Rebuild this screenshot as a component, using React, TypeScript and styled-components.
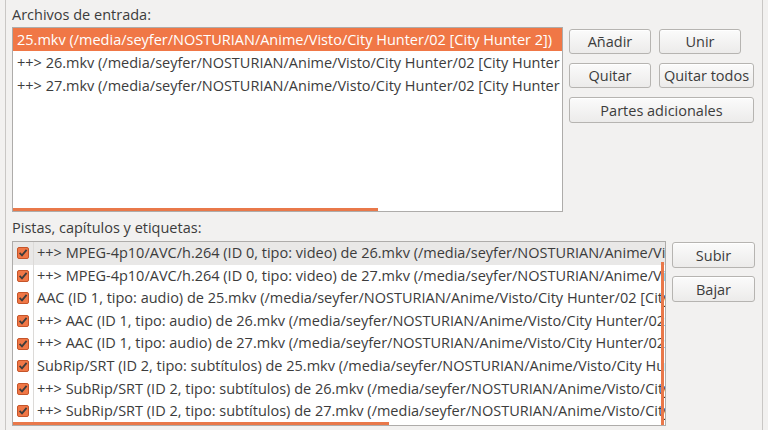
import React from "react";
import styled, { createGlobalStyle } from "styled-components";

const Global = createGlobalStyle`
  html, body { margin: 0; padding: 0; background: #f2f1f0; }
  body {
    font-family: "Open Sans", "DejaVu Sans", sans-serif;
    font-size: 14.5px;
    color: #3c3c3c;
    width: 768px;
    height: 430px;
    overflow: hidden;
  }
`;

const Frame = styled.div`
  box-sizing: border-box;
  margin-left: 5px;
  width: 758px;
  height: 430px;
  border-left: 1px solid #c9c7c5;
  border-right: 1px solid #c9c7c5;
  padding: 0 7px 0 6px;
  display: flex;
  flex-direction: column;
`;

const Label = styled.div<{ $h: number }>`
  height: ${(p) => p.$h}px;
  display: flex;
  align-items: center;
  padding-top: 1px;
  box-sizing: border-box;
  white-space: nowrap;
`;

const Section = styled.div<{ $gap: number }>`
  display: flex;
  align-items: flex-start;
  gap: ${(p) => p.$gap}px;
`;

const ListBox = styled.div<{ $w: number }>`
  position: relative;
  box-sizing: border-box;
  width: ${(p) => p.$w}px;
  height: 185px;
  background: #ffffff;
  border: 1px solid #aeacaa;
  overflow: hidden;
`;

const FileRow = styled.div<{ $sel?: boolean }>`
  height: 23px;
  line-height: 23px;
  padding-left: 4px;
  white-space: nowrap;
  overflow: hidden;
  text-overflow: clip;
  background: ${(p) => (p.$sel ? "#f07746" : "transparent")};
  color: ${(p) => (p.$sel ? "#ffffff" : "#3c3c3c")};
`;

const TrackRow = styled.div<{ $cursor?: boolean }>`
  height: 22.6px;
  display: flex;
  align-items: stretch;
  white-space: nowrap;
  overflow: hidden;
  background: ${(p) => (p.$cursor ? "#e9e8e7" : "transparent")};
`;

const CheckCell = styled.div`
  width: 20px;
  flex: none;
  border-right: 1px solid #dcdad8;
  display: flex;
  align-items: center;
  justify-content: center;
`;

const TrackText = styled.div`
  padding-left: 3px;
  line-height: 22.6px;
  overflow: hidden;
  min-width: 0;
`;

const HScroll = styled.div<{ $w: number }>`
  position: absolute;
  left: 0;
  bottom: 0;
  width: ${(p) => p.$w}px;
  height: 3px;
  background: #e9784a;
`;

const VScroll = styled.div`
  position: absolute;
  right: 1px;
  top: 20px;
  bottom: 0;
  width: 3px;
  background: #e9784a;
`;

const ButtonCol = styled.div<{ $gap: number; $top: number }>`
  display: flex;
  flex-direction: column;
  gap: ${(p) => p.$gap}px;
  margin-top: ${(p) => p.$top}px;
`;

const ButtonRow = styled.div`
  display: flex;
  gap: 8px;
`;

const Button = styled.button<{ $w: number; $h?: number }>`
  box-sizing: border-box;
  width: ${(p) => p.$w}px;
  height: ${(p) => p.$h ?? 25}px;
  padding: 0;
  font-family: inherit;
  font-size: 14.5px;
  color: #3c3c3c;
  border: 1px solid #b6b4b1;
  border-radius: 3px;
  background: linear-gradient(#fbfbfb, #ecebea);
  box-shadow: inset 0 1px 0 #ffffff;
  white-space: nowrap;
`;

const Check = () => (
  <svg width="12" height="12" viewBox="0 0 12 12">
    <rect x="0.5" y="0.5" width="11" height="11" rx="1.5" fill="#f07746" stroke="#c5552a" />
    <path d="M2.6 5.8 L5 8.3 L9.6 2.8" fill="none" stroke="#3c3c3c" strokeWidth="1.8" />
  </svg>
);

const files = [
  "25.mkv (/media/seyfer/NOSTURIAN/Anime/Visto/City Hunter/02 [City Hunter 2])",
  "++> 26.mkv (/media/seyfer/NOSTURIAN/Anime/Visto/City Hunter/02 [City Hunter 2])",
  "++> 27.mkv (/media/seyfer/NOSTURIAN/Anime/Visto/City Hunter/02 [City Hunter 2])",
];

const tracks = [
  "++> MPEG-4p10/AVC/h.264 (ID 0, tipo: video) de 26.mkv (/media/seyfer/NOSTURIAN/Anime/Visto/City Hunter/02 [City Hunter 2])",
  "++> MPEG-4p10/AVC/h.264 (ID 0, tipo: video) de 27.mkv (/media/seyfer/NOSTURIAN/Anime/Visto/City Hunter/02 [City Hunter 2])",
  "AAC (ID 1, tipo: audio) de 25.mkv (/media/seyfer/NOSTURIAN/Anime/Visto/City Hunter/02 [City Hunter 2])",
  "++> AAC (ID 1, tipo: audio) de 26.mkv (/media/seyfer/NOSTURIAN/Anime/Visto/City Hunter/02 [City Hunter 2])",
  "++> AAC (ID 1, tipo: audio) de 27.mkv (/media/seyfer/NOSTURIAN/Anime/Visto/City Hunter/02 [City Hunter 2])",
  "SubRip/SRT (ID 2, tipo: subtítulos) de 25.mkv (/media/seyfer/NOSTURIAN/Anime/Visto/City Hunter/02 [City Hunter 2])",
  "++> SubRip/SRT (ID 2, tipo: subtítulos) de 26.mkv (/media/seyfer/NOSTURIAN/Anime/Visto/City Hunter/02 [City Hunter 2])",
  "++> SubRip/SRT (ID 2, tipo: subtítulos) de 27.mkv (/media/seyfer/NOSTURIAN/Anime/Visto/City Hunter/02 [City Hunter 2])",
];

export default function App() {
  return (
    <>
      <Global />
      <Frame>
        <Label $h={27}>Archivos de entrada:</Label>
        <Section $gap={6}>
          <ListBox $w={551}>
            {files.map((f, i) => (
              <FileRow key={i} $sel={i === 0}>
                {f}
              </FileRow>
            ))}
            <HScroll $w={365} />
          </ListBox>
          <ButtonCol $gap={9} $top={2}>
            <ButtonRow>
              <Button $w={82}>Añadir</Button>
              <Button $w={82}>Unir</Button>
            </ButtonRow>
            <ButtonRow>
              <Button $w={82}>Quitar</Button>
              <Button $w={95}>Quitar todos</Button>
            </ButtonRow>
            <Button $w={185} $h={26}>Partes adicionales</Button>
          </ButtonCol>
        </Section>
        <Label $h={29}>Pistas, capítulos y etiquetas:</Label>
        <Section $gap={6}>
          <ListBox $w={654}>
            {tracks.map((t, i) => (
              <TrackRow key={i} $cursor={i === 0}>
                <CheckCell>
                  <Check />
                </CheckCell>
                <TrackText>{t}</TrackText>
              </TrackRow>
            ))}
            <VScroll />
            <HScroll $w={376} />
          </ListBox>
          <ButtonCol $gap={8} $top={1}>
            <Button $w={83} $h={26}>Subir</Button>
            <Button $w={83} $h={26}>Bajar</Button>
          </ButtonCol>
        </Section>
      </Frame>
    </>
  );
}
